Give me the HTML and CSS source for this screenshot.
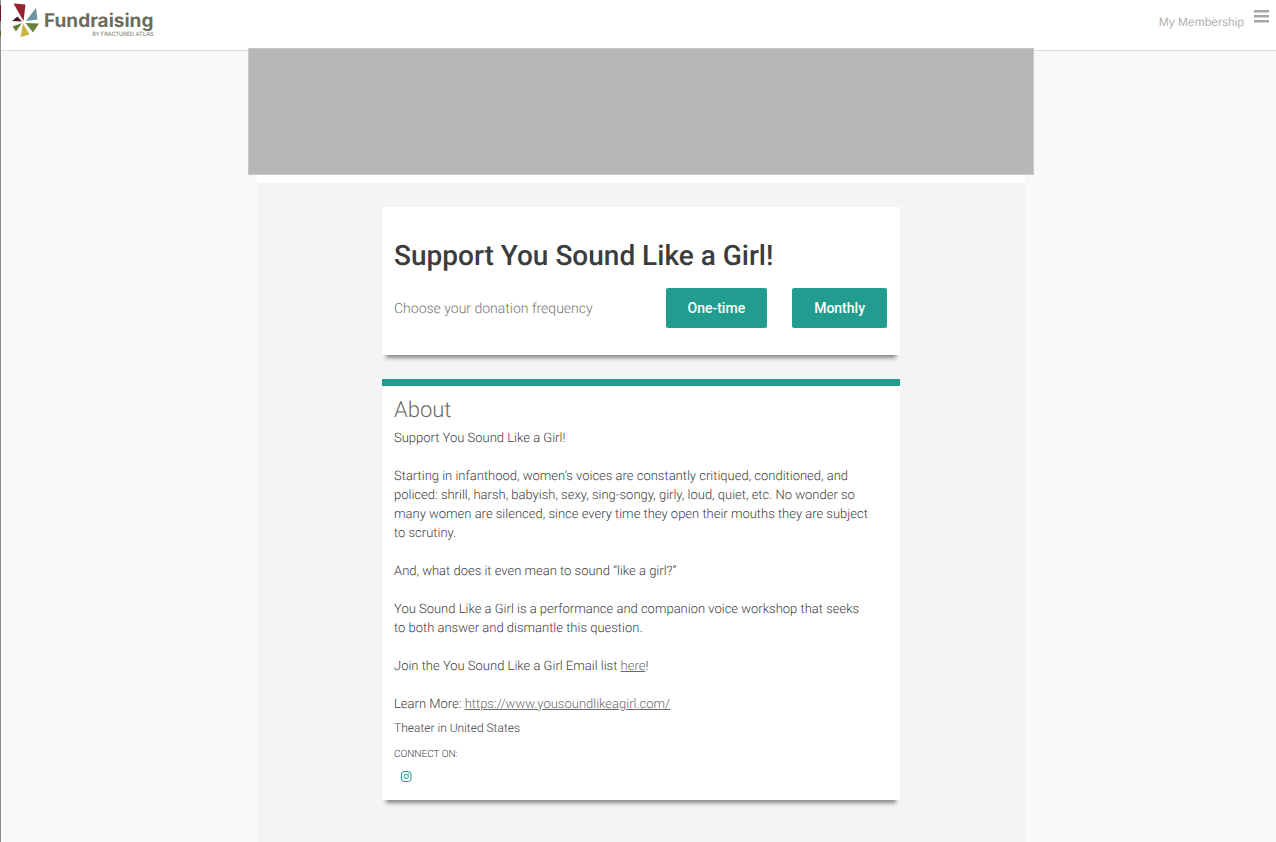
FILE: index.html
```html
<!DOCTYPE html>
<html lang="en">
<head>
<meta charset="utf-8">
<title>Support You Sound Like a Girl!</title>
<link rel="stylesheet" href="styles.css">
</head>
<body>
<header class="topbar">
  <a class="logo" href="#">
    <svg class="logo-mark" viewBox="0 0 28 36" aria-hidden="true">
      <path fill="#96222f" d="M1.500 0.500L13.500 1.500L11.500 18Z"/>
      <path fill="#6b93a0" d="M24 5L25.500 16.500L14 18Z"/>
      <path fill="#4b1a20" d="M5.500 13.500L10 18.500L0 18Z"/>
      <path fill="#667f37" d="M0.500 23.500L10 20L4 28.500Z"/>
      <path fill="#cdb23c" d="M11 20.500L17.500 31.500L8.500 34Z"/>
      <path fill="#6a803c" d="M13.500 20L27 20.500L21 29.500Z"/>
    </svg>
    <span class="logo-text">
      <span class="logo-name">Fundraising</span>
      <span class="logo-by">BY FRACTURED ATLAS</span>
    </span>
  </a>
  <nav class="nav">
    <a class="member" href="#">My Membership</a>
    <button class="menu" type="button" aria-label="Menu">
      <svg viewBox="0 0 15 13" width="15" height="13"><path fill="#a3a8a5" d="M0 0h15v2.400H0zM0 5h15v2.400H0zM0 10h15v2.400H0z"/></svg>
    </button>
  </nav>
</header>
<main class="page">
  <div class="banner"></div>
  <div class="column">
    <section class="card donate">
      <h1>Support You Sound Like a Girl!</h1>
      <div class="choices">
        <p>Choose your donation frequency</p>
        <button class="btn" type="button">One-time</button>
        <button class="btn" type="button">Monthly</button>
      </div>
    </section>
    <section class="card about">
      <h2>About</h2>
      <div class="story">
        <p>Support You Sound Like a Girl!</p>
        <p>Starting in infanthood, women’s voices are constantly critiqued, conditioned, and policed: shrill, harsh, babyish, sexy, sing-songy, girly, loud, quiet, etc. No wonder so many women are silenced, since every time they open their mouths they are subject to scrutiny.</p>
        <p>And, what does it even mean to sound “like a girl?”</p>
        <p>You Sound Like a Girl is a performance and companion voice workshop that seeks to both answer and dismantle this question.</p>
        <p>Join the You Sound Like a Girl Email list <a href="#">here</a>!</p>
        <p>Learn More: <a href="#">https://www.yousoundlikeagirl.com/</a></p>
      </div>
      <p class="category">Theater in United States</p>
      <p class="connect">CONNECT ON:</p>
      <a class="social" href="#" aria-label="Instagram">
        <svg viewBox="0 0 12 12" width="12" height="12" fill="none" stroke="#229c8f"><rect x="1.500" y=".5" width="9.500" height="10" rx="2.500"/><circle cx="6.200" cy="5.500" r="2.200"/><circle cx="8.800" cy="2.800" r=".3"/></svg>
      </a>
    </section>
  </div>
</main>
</body>
</html>
```
FILE: styles.css
```css
* { box-sizing: border-box; }
html { background: #f9f9f9; }
body {
  margin: 0;
  min-height: 100vh;
  display: flex;
  flex-direction: column;
  padding-left: 1px;
  background: linear-gradient(#8f8f8f 5px, #6b1a24 5px 21px, #8f8f8f 21px 31px, #56682f 31px 36px, #8f8f8f 36px) 0 0 / 1px 100% no-repeat;
  font-family: Roboto, sans-serif;
  font-weight: 300;
  color: #3c3c3c;
  text-rendering: geometricPrecision;
}
h1, h2, p { margin: 0; }
a { color: inherit; }
.topbar {
  display: flex;
  justify-content: space-between;
  align-items: flex-start;
  height: 51px;
  padding: 3px 7px 0 11px;
  background: #fff;
  border-bottom: 1px solid #dcdcdc;
}
.logo { display: flex; text-decoration: none; }
.logo-mark { width: 28px; height: 36px; }
.logo-text {
  display: flex;
  flex-direction: column;
  padding: 8px 0 0 4px;
}
.logo-name {
  font: 700 19px/20px Inter, sans-serif;
  color: #6c6d5b;
}
.logo-by {
  font: 400 6px/8px Roboto, sans-serif;
  color: #77786a;
  text-align: right;
}
.nav { display: flex; gap: 10px; }
.member {
  padding-top: 11px;
  font: 400 12px/16px "Liberation Sans", sans-serif;
  color: #b0b3b1;
  text-decoration: none;
}
.menu {
  display: flex;
  align-self: flex-start;
  margin-top: 7px;
  padding: 0;
  border: 0;
  background: none;
}
.page {
  flex: 1;
  display: flex;
  flex-direction: column;
  align-items: center;
  padding-left: 5px;
}
.banner {
  position: relative;
  width: 786px;
  max-width: 100%;
  height: 127px;
  margin-top: -3px;
  background: #b7b7b7;
  border: 1px solid #c8c8c8;
}
.column {
  flex: 1;
  display: flex;
  flex-direction: column;
  align-items: center;
  gap: 24px;
  width: 768px;
  max-width: 100%;
  padding: 24px 0;
  border-top: 8px solid #fff;
  background: #f3f4f6;
}
.card {
  width: 518px;
  max-width: 100%;
  padding: 0 12px;
  background: #fff;
  box-shadow: 0 7px 4px -4px #888;
}
.donate { padding: 32px 13px 27px 12px; }
h1 {
  font-size: 28px;
  line-height: 33px;
  font-weight: 500;
}
.choices {
  display: flex;
  align-items: center;
  gap: 25px;
  margin-top: 16px;
}
.choices p {
  flex: 1;
  padding-top: 2px;
  font-size: 14px;
  line-height: 20px;
  color: #757575;
}
.btn {
  height: 40px;
  padding: 0 22px;
  border: 0;
  border-radius: 2px;
  background: #229c8f;
  color: #fff;
  font: 500 14px/20px Roboto, sans-serif;
}
.about { border-top: 7px solid #229c8f; padding-bottom: 17px; }
h2 {
  padding-top: 11px;
  font-size: 22px;
  line-height: 28px;
  font-weight: 300;
  color: #6a6a6a;
}
.story {
  display: grid;
  gap: 19px;
  max-width: 476px;
  padding-top: 4px;
  font-size: 13px;
  line-height: 19px;
}
.story a { color: #6a6a6a; }
.category {
  padding-top: 5px;
  font-size: 12px;
  line-height: 18px;
}
.connect {
  padding-top: 11px;
  font-size: 10px;
  line-height: 14px;
}
.social {
  display: flex;
  width: 12px;
  margin: 9px 0 0 6px;
}
```
